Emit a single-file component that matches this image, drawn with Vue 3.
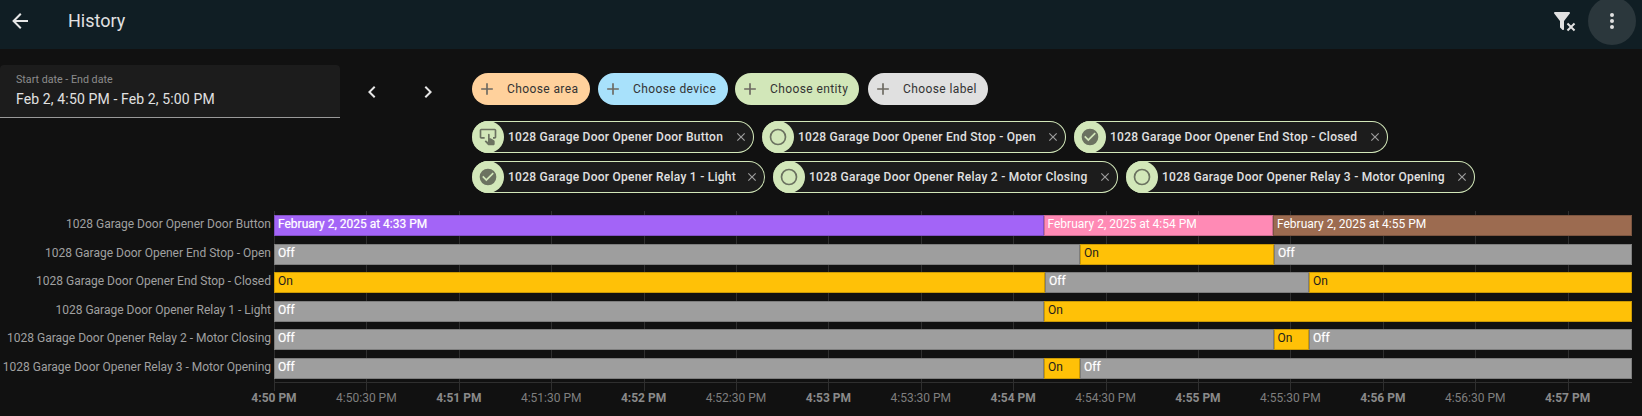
<script setup>
const pxPerSec = 92.4 / 30
const rows = [
  { name: '1028 Garage Door Opener Door Button', segs: [
    { w: 769.5, c: 'purple', t: 'February 2, 2025 at 4:33 PM' },
    { w: 229.5, c: 'pink', t: 'February 2, 2025 at 4:54 PM' },
    { w: 359, c: 'brown', t: 'February 2, 2025 at 4:55 PM' } ] },
  { name: '1028 Garage Door Opener End Stop - Open', segs: [
    { w: 806, c: 'off', t: 'Off' }, { w: 194, c: 'on', t: 'On' }, { w: 358, c: 'off', t: 'Off' } ] },
  { name: '1028 Garage Door Opener End Stop - Closed', segs: [
    { w: 771, c: 'on', t: 'On' }, { w: 264, c: 'off', t: 'Off' }, { w: 323, c: 'on', t: 'On' } ] },
  { name: '1028 Garage Door Opener Relay 1 - Light', segs: [
    { w: 770, c: 'off', t: 'Off' }, { w: 588, c: 'on', t: 'On' } ] },
  { name: '1028 Garage Door Opener Relay 2 - Motor Closing', segs: [
    { w: 999.5, c: 'off', t: 'Off' }, { w: 35.5, c: 'on', t: 'On' }, { w: 323, c: 'off', t: 'Off' } ] },
  { name: '1028 Garage Door Opener Relay 3 - Motor Opening', segs: [
    { w: 770, c: 'off', t: 'Off' }, { w: 36, c: 'on', t: 'On' }, { w: 552, c: 'off', t: 'Off' } ] },
]
const labels = ['4:50 PM','4:50:30 PM','4:51 PM','4:51:30 PM','4:52 PM','4:52:30 PM','4:53 PM','4:53:30 PM','4:54 PM','4:54:30 PM','4:55 PM','4:55:30 PM','4:56 PM','4:56:30 PM','4:57 PM']
const ticks = labels.map((t, i) => ({ t, x: i * 30 * pxPerSec, major: i % 2 === 0 }))
const pickers = [
  { t: 'Choose area', c: 'area' },
  { t: 'Choose device', c: 'device' },
  { t: 'Choose entity', c: 'entity' },
  { t: 'Choose label', c: 'tag' },
]
const chipRows = [
  [ { t: '1028 Garage Door Opener Door Button', i: 'touch', w: 282 },
    { t: '1028 Garage Door Opener End Stop - Open', i: 'ring', w: 304 },
    { t: '1028 Garage Door Opener End Stop - Closed', i: 'check', w: 314 } ],
  [ { t: '1028 Garage Door Opener Relay 1 - Light', i: 'check', w: 293 },
    { t: '1028 Garage Door Opener Relay 2 - Motor Closing', i: 'ring', w: 345 },
    { t: '1028 Garage Door Opener Relay 3 - Motor Opening', i: 'ring', w: 349 } ],
]
</script>

<template>
  <div class="page">
    <header class="bar">
      <svg class="back" viewBox="0 0 24 24" width="24" height="24"><path d="M20 11v2H8l5.5 5.5-1.42 1.42L4.16 12l7.92-7.92L13.5 5.5 8 11h12z" fill="currentColor"/></svg>
      <div class="title">History</div>
      <div class="spacer"></div>
      <svg class="filter" viewBox="0 0 24 24" width="24" height="24"><path d="M14.76 20.83 17.6 18l-2.84-2.83 1.41-1.41L19 16.59l2.83-2.83 1.41 1.41L20.41 18l2.83 2.83-1.41 1.41L19 19.41l-2.83 2.83-1.41-1.41ZM12 12v7.88c.04.3-.06.62-.29.83a1 1 0 0 1-1.41 0l-2-2a1 1 0 0 1-.3-.83V12h-.03L2.21 4.62a1 1 0 0 1 .17-1.4c.19-.14.4-.22.62-.22h14c.22 0 .43.08.62.22a1 1 0 0 1 .17 1.4L12.03 12H12Z" fill="currentColor"/></svg>
      <div class="more">
        <svg viewBox="0 0 24 24" width="24" height="24"><path d="M12 16a2 2 0 1 1 0 4 2 2 0 0 1 0-4Zm0-6a2 2 0 1 1 0 4 2 2 0 0 1 0-4Zm0-6a2 2 0 1 1 0 4 2 2 0 0 1 0-4Z" fill="currentColor"/></svg>
      </div>
    </header>

    <section class="filters">
      <div class="date">
        <div class="date-label">Start date - End date</div>
        <div class="date-value">Feb 2, 4:50 PM - Feb 2, 5:00 PM</div>
      </div>
      <div class="nav">
        <svg viewBox="0 0 24 24" width="24" height="24"><path d="M15.41 16.58 10.83 12l4.58-4.59L14 6l-6 6 6 6 1.41-1.42Z" fill="currentColor"/></svg>
        <svg viewBox="0 0 24 24" width="24" height="24"><path d="M8.59 16.58 13.17 12 8.59 7.41 10 6l6 6-6 6-1.41-1.42Z" fill="currentColor"/></svg>
      </div>
      <div class="targets">
        <div class="pickers">
          <div v-for="p in pickers" :key="p.t" class="picker" :class="p.c">
            <svg viewBox="0 0 24 24" width="20" height="20"><path d="M19 13h-6v6h-2v-6H5v-2h6V5h2v6h6v2Z" fill="currentColor"/></svg>
            <span>{{ p.t }}</span>
          </div>
        </div>
        <div v-for="(r, ri) in chipRows" :key="ri" class="chips">
          <div v-for="c in r" :key="c.t" class="chip" :style="{ width: c.w + 'px' }">
            <div class="chip-icon">
              <svg v-if="c.i === 'ring'" viewBox="0 0 24 24" width="20" height="20"><path d="M12 20a8 8 0 1 1 0-16 8 8 0 0 1 0 16Zm0-18a10 10 0 1 0 0 20 10 10 0 0 0 0-20Z" fill="currentColor"/></svg>
              <svg v-else-if="c.i === 'check'" viewBox="0 0 24 24" width="20" height="20"><path d="M12 2a10 10 0 1 0 0 20 10 10 0 0 0 0-20Zm-2 15-5-5 1.41-1.41L10 14.17l7.59-7.59L19 8l-9 9Z" fill="currentColor"/></svg>
              <svg v-else viewBox="0 0 24 24" width="20" height="20"><path d="M20 20.5c-.03.82-.68 1.47-1.5 1.5H13c-.38 0-.74-.15-1-.43l-4-4.2.74-.77c.19-.21.46-.32.76-.32h.2L12 18V9c0-.55.45-1 1-1s1 .45 1 1v4.47l1.21.13 3.94 2.19c.53.24.85.77.85 1.35v3.36ZM20 2H4C2.9 2 2 2.9 2 4v8c0 1.11.9 2 2 2h4v-2H4V4h16v8h-2v2h2v-.04l.04.04c1.09 0 1.96-.91 1.96-2V4c0-1.1-.89-2-2-2Z" fill="currentColor"/></svg>
            </div>
            <span class="chip-text">{{ c.t }}</span>
            <svg class="chip-x" viewBox="0 0 24 24" width="14" height="14"><path d="M19 6.41 17.59 5 12 10.59 6.41 5 5 6.41 10.59 12 5 17.59 6.41 19 12 13.41 17.59 19 19 17.59 13.41 12 19 6.41Z" fill="currentColor"/></svg>
          </div>
        </div>
      </div>
    </section>

    <section class="chart">
      <div class="labels">
        <div v-for="r in rows" :key="r.name" class="label">{{ r.name }}</div>
      </div>
      <div class="plot">
        <div class="grid">
          <i v-for="t in ticks" :key="t.t" class="gridline" :style="{ left: t.x + 'px' }"></i>
          <i class="baseline"></i>
        </div>
        <div class="tracks">
          <div v-for="r in rows" :key="r.name" class="track">
            <div v-for="(s, i) in r.segs" :key="i" class="seg" :class="s.c" :style="{ width: s.w + 'px' }">{{ s.t }}</div>
          </div>
        </div>
        <div class="ticks">
          <span v-for="t in ticks" :key="t.t" class="tick" :class="{ major: t.major }" :style="{ left: t.x + 'px' }">{{ t.t }}</span>
        </div>
      </div>
    </section>
  </div>
</template>

<style scoped>
.page { width: 1642px; height: 416px; background: #111111; overflow: hidden; font-family: Roboto, sans-serif; color: #e1e1e1; }
.bar { height: 49px; background: #101e24; display: flex; align-items: center; padding-left: 8px; color: #e1e1e1; box-sizing: border-box; }
.back { margin-top: -7px; color: #e6e6e6; flex: none; }
.title { margin-left: 36px; font-size: 18px; margin-top: -7px; line-height: 28px; }
.spacer { flex: 1; }
.filter { margin-top: -7px; margin-right: 12px; flex: none; }
.more { width: 48px; height: 48px; border-radius: 50%; background: #2b373c; display: flex; align-items: center; justify-content: center; margin-right: 6px; margin-top: -7px; flex: none; }
.filters { display: flex; align-items: flex-start; height: 150px; padding-top: 16px; box-sizing: border-box; }
.date { width: 340px; height: 53px; background: #1c1c1c; border-bottom: 1px solid #9a9a9a; border-radius: 4px 4px 0 0; padding: 9px 16px 0; box-sizing: border-box; }
.date-label { font-size: 10.7px; line-height: 12px; color: #8c8c8c; }
.date-value { font-size: 14px; letter-spacing: .13px; line-height: 20px; margin-top: 3px; color: #e1e1e1; }
.nav { display: flex; gap: 32px; padding-top: 15px; margin-left: 20px; color: #e6e6e6; }
.targets { margin-left: 32px; padding-top: 8px; }
.pickers { display: flex; height: 32px; margin-bottom: 16px; }
.picker { height: 32px; border-radius: 16px; display: flex; align-items: center; padding-left: 5px; box-sizing: border-box; color: #333; font-size: 12px; letter-spacing: .4px; white-space: nowrap; margin-right: 8px; flex: none; }
.picker svg { color: #6d6a62; margin-right: 10px; flex: none; }
.area { background: #ffd19c; width: 118px; }
.device { background: #a8e1fb; width: 130px; margin-right: 7px; }
.entity { background: #d2e7b9; width: 124px; margin-right: 9px; }
.tag { background: #e0e0e0; width: 120px; }
.chips { display: flex; gap: 8px; margin-bottom: 8px; }
.chip { height: 32px; border-radius: 16px; border: 1px solid #d2e7b9; border-left: none; background: #1c1c1c; display: flex; align-items: center; box-sizing: border-box; padding-right: 5px; color: #e1e1e1; font-size: 12px; font-weight: 500; flex: none; }
.chip-icon { width: 32px; height: 32px; border-radius: 50%; background: #d2e7b9; color: #6b7260; display: flex; align-items: center; justify-content: center; flex: none; margin-right: 4px; }
.chip-text { white-space: nowrap; letter-spacing: .25px; }
.chip-x { color: #9d9d9d; margin-left: auto; flex: none; }
.chart { display: flex; padding-top: 16px; }
.labels { width: 271px; flex: none; }
.label { height: 28.6px; line-height: 19px; font-size: 12px; color: #a0a0a0; text-align: right; white-space: nowrap; }
.plot { position: relative; margin-left: 3px; width: 1358px; height: 200px; }
.grid { position: absolute; left: 0; top: -4px; width: 100%; height: 180px; }
.gridline { position: absolute; top: 0; width: 1px; height: 100%; background: #2f2f2f; }
.baseline { position: absolute; left: 0; right: 0; top: 171px; height: 1px; background: #2f2f2f; }
.tracks { position: relative; }
.track { display: flex; height: 21px; margin-bottom: 7.6px; }
.seg { box-sizing: border-box; height: 21px; line-height: 19px; padding-left: 4px; font-size: 12px; white-space: nowrap; overflow: hidden; flex: none; box-shadow: inset 0 0 0 1px rgba(0, 0, 0, .2); }
.purple { background: #a364f7; color: #fff; text-shadow: 0 0 1px rgba(255, 255, 255, .6); }
.pink { background: #ff8ab5; color: #fff; }
.brown { background: #9c6b50; color: #fff; }
.off { background: #9e9e9e; color: #fff; text-shadow: 0 0 1px rgba(255, 255, 255, .6); }
.on { background: #ffc107; color: #1c1c1c; }
.ticks { position: absolute; left: 0; top: 173px; height: 20px; width: 100%; }
.tick { position: absolute; transform: translateX(-50%); font-size: 12px; color: #7f7f7f; white-space: nowrap; line-height: 20px; }
.tick.major { font-weight: 700; color: #8a8a8a; }
</style>
